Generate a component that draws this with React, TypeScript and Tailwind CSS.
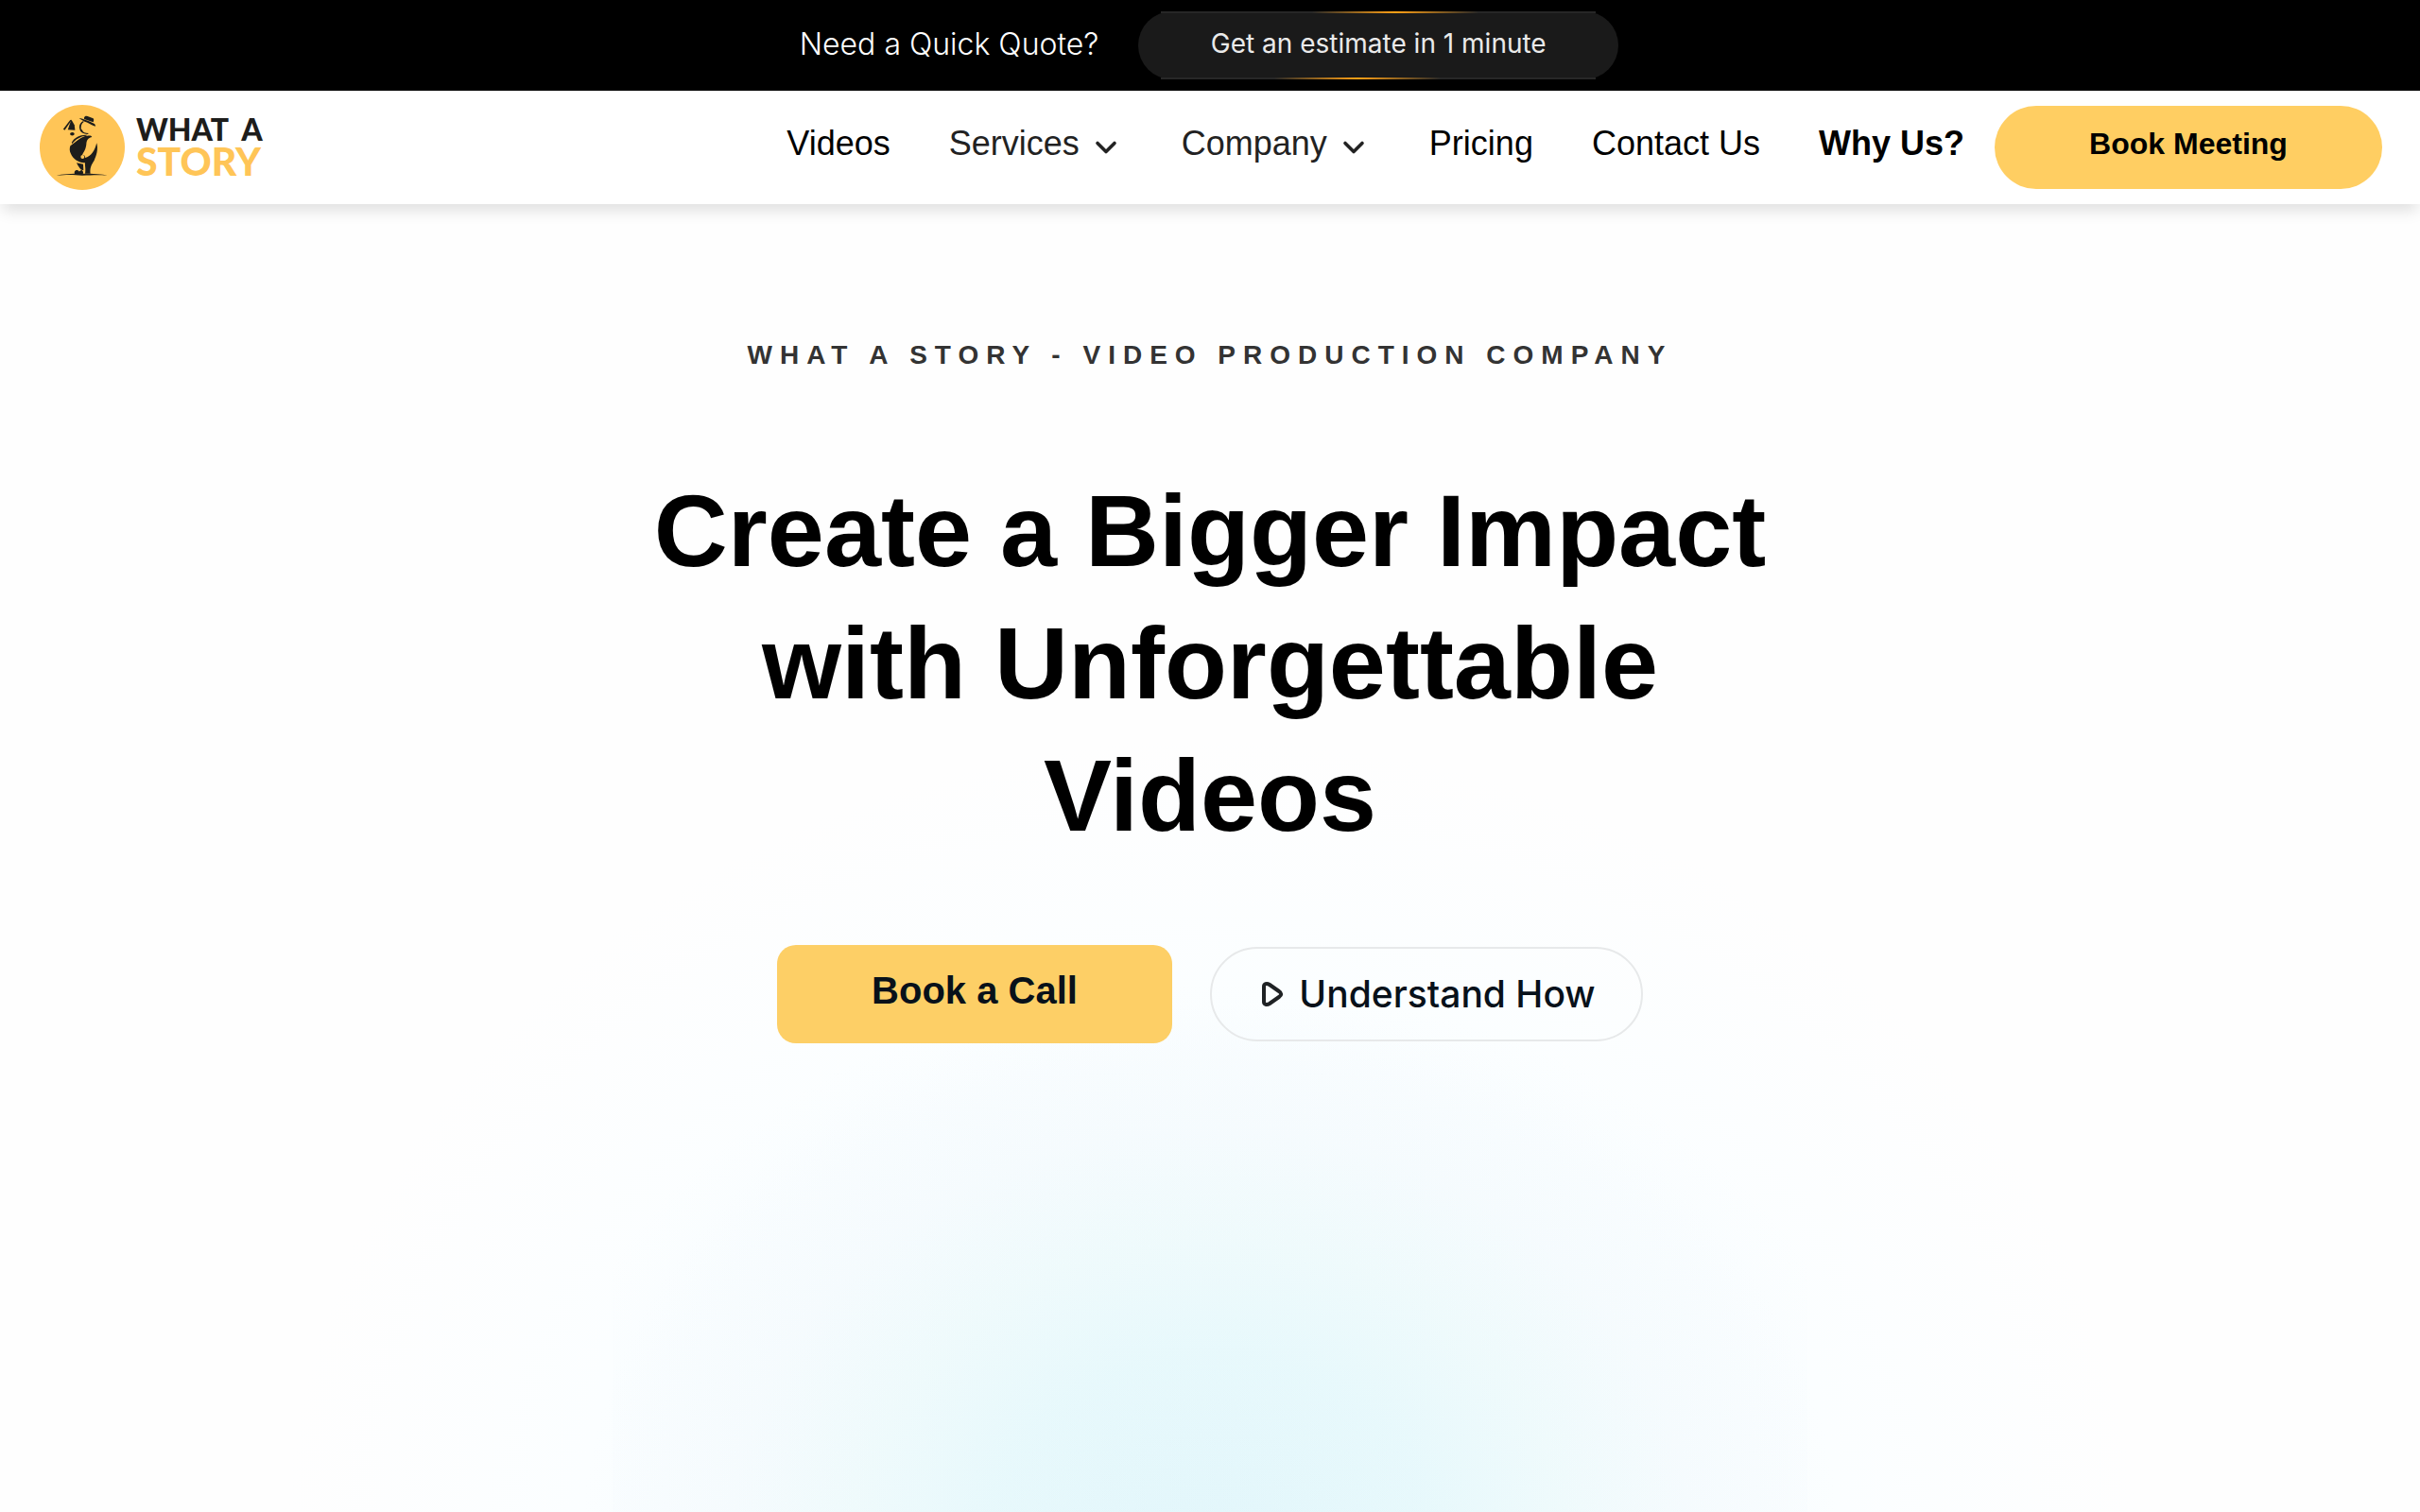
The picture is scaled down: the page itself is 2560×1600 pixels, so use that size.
import { useState } from 'react';
import { ChevronDown } from 'lucide-react';

interface NavItem {
  label: string;
  href: string;
  menu?: boolean;
  bold?: boolean;
}

const navItems: NavItem[] = [
  { label: 'Videos', href: '#videos' },
  { label: 'Services', href: '#services', menu: true },
  { label: 'Company', href: '#company', menu: true },
  { label: 'Pricing', href: '#pricing' },
  { label: 'Contact Us', href: '#contact' },
  { label: 'Why Us?', href: '#why-us', bold: true },
];

function LogoMark() {
  return (
    <svg viewBox="0 0 284 284" className="size-[94px] shrink-0" aria-hidden="true">
      <circle cx="142" cy="142" r="136" fill="#ffc557" />
      <g fill="#1d1d1b">
        {/* megaphone */}
        <path d="M107 53 L117 70 L119 87 L96 85 Z" />
        <path d="M104 54 L107 57 L86 87 L81 84 Z" />
        <ellipse cx="110" cy="99" rx="7" ry="5.5" />
        {/* hat */}
        <path d="M148 47 C150 40 157 40 163 44 L177 49 C180 51 179 57 177 61 L148 51 Z" />
        <path d="M132 48 C145 50 166 58 178 65 C182 67 185 70 184 75 C176 73 167 66 157 62 C148 58 138 54 132 48 Z" />
        {/* face */}
        <path d="M144 58 C134 64 131 74 134 84 C136 94 146 99 159 100 L163 97 C151 97 144 94 142 87 L138 82 C138 73 139 66 148 60 Z" />
        {/* arm and torso */}
        <path d="M108 127 C116 111 134 101 158 102 L154 105 C136 106 120 117 110 130 Z" />
        <path d="M104 137 C124 123 139 106 158 105 C166 104 171 104 173 109 C158 112 156 122 155 133 C153 149 147 156 142 166 C150 165 152 170 151 175 C170 172 183 151 188 128 C194 148 187 169 180 184 C170 199 166 209 168 226 L151 226 C154 210 150 201 151 191 C133 193 112 178 106 163 C101 154 101 145 104 137 Z" />
        {/* legs and shoes */}
        <path d="M124 191 L145 196 L146 215 L138 213 C133 206 128 201 124 191 Z" />
        <path d="M120 216 C126 213 129 215 132 219 L140 214 C146 219 146 223 144 227 L118 227 C116 222 117 219 120 216 Z" />
        <path d="M60 232 C91 224 194 224 222 232 C192 229 173 231 142 232 C112 229 91 229 60 232 Z" />
      </g>
      <circle cx="143" cy="172" r="6" fill="#ffc557" />
    </svg>
  );
}

function Logo() {
  return (
    <a href="/" aria-label="What a Story" className="flex items-center gap-2.5 font-['Lato',sans-serif] font-black">
      <LogoMark />
      <span className="flex flex-col pb-0.5 whitespace-nowrap">
        <span className="text-[32px] leading-8 text-[#1d1d1b]">WHAT&nbsp; A</span>
        <span className="text-[41px] leading-9 text-[#ffc557]">STORY</span>
      </span>
    </a>
  );
}

function QuoteBar() {
  return (
    <div className="flex h-24 items-center justify-center gap-[42px] bg-black pr-0.5 font-['Inter',sans-serif]">
      <p className="pb-0.5 text-[32px] font-light text-white">Need a Quick Quote?</p>
      <a
        href="#estimate"
        className="relative flex h-[72px] w-[508px] items-center justify-center rounded-full bg-[#1a1a1a] pb-1 text-[28px] text-[#eaeaea]"
      >
        <span className="absolute inset-x-6 top-0 h-0.5 bg-[#272727]" />
        <span className="absolute inset-x-6 bottom-0 h-0.5 bg-[#272727]" />
        <span className="absolute top-0 left-[184px] h-0.5 w-44 bg-linear-to-r from-transparent via-[#ffa116] to-transparent" />
        <span className="absolute bottom-0 left-36 h-0.5 w-44 bg-linear-to-r from-transparent via-[#ffa116] to-transparent" />
        Get an estimate in 1 minute
      </a>
    </div>
  );
}

function Header() {
  const [openMenu, setOpenMenu] = useState<string | null>(null);

  return (
    <header className="relative z-10 flex h-[120px] items-center justify-between bg-white px-10 shadow-[0_10px_15px_-3px_rgba(0,0,0,0.12)]">
      <Logo />
      <div className="flex items-center gap-8">
        <nav className="flex items-center gap-[62px] pb-2 text-[36px] whitespace-nowrap">
          {navItems.map((item) =>
            item.menu ? (
              <button
                key={item.label}
                type="button"
                aria-expanded={openMenu === item.label}
                onClick={() => setOpenMenu(openMenu === item.label ? null : item.label)}
                className="flex items-center gap-2.5 text-[#222222]"
              >
                {item.label}
                <ChevronDown className="mt-2 size-9" strokeWidth={2.4} />
              </button>
            ) : (
              <a key={item.label} href={item.href} className={item.bold ? 'font-bold' : ''}>
                {item.label}
              </a>
            )
          )}
        </nav>
        <a
          href="#book-meeting"
          className="flex h-[88px] w-[410px] items-center justify-center rounded-full bg-[#ffce62] pb-2 text-[32px] font-bold"
        >
          Book Meeting
        </a>
      </div>
    </header>
  );
}

function Hero() {
  return (
    <main className="flex flex-1 flex-col bg-[radial-gradient(980px_860px_at_50%_103%,#e2f6fb_0%,#e8f9fc_24%,#f0fbfc_38%,#f7fcfe_52%,#fbfeff_68%,#fefefe_100%)]">
      <div className="mx-auto flex w-full max-w-[1264px] flex-1 flex-col items-center bg-[radial-gradient(720px_560px_at_50%_100%,rgba(225,245,248,0.1),rgba(220,235,250,0.06)_85%,transparent)] pt-36 text-center">
        <p className="text-[28px] leading-8 font-bold tracking-[8px] text-[#333333] uppercase">
          What a Story - Video Production Company
        </p>
        <h1 className="mt-[100px] text-[108px] leading-[140px] font-bold">
          Create a Bigger Impact
          <br />
          with Unforgettable
          <br />
          Videos
        </h1>
        <div className="mt-[88px] flex items-center gap-10">
          <a
            href="#book-call"
            className="flex h-[104px] w-[418px] items-center justify-center rounded-[20px] bg-[#fdcf66] pb-2 text-[40px] font-bold text-[#08111a]"
          >
            Book a Call
          </a>
          <a
            href="#how"
            className="flex h-[100px] w-[458px] items-center justify-center gap-4 rounded-full border-2 border-[#e7e9ea] pl-1 font-['Inter',sans-serif] text-[39px] font-medium text-[#08111a]"
          >
            <svg viewBox="0 0 24 28" className="h-7 w-6" fill="none" stroke="#1f2224" strokeWidth="4" strokeLinejoin="round" aria-hidden="true">
              <path d="M3 6 C3 3 6 2 9 4 L19 11 C22 13 22 15 19 17 L9 24 C6 26 3 25 3 22 Z" />
            </svg>
            Understand How
          </a>
        </div>
      </div>
    </main>
  );
}

export default function App() {
  return (
    <div className="flex min-h-screen flex-col bg-[#fefefe] font-['Liberation_Sans',sans-serif] text-black">
      <QuoteBar />
      <Header />
      <Hero />
    </div>
  );
}
